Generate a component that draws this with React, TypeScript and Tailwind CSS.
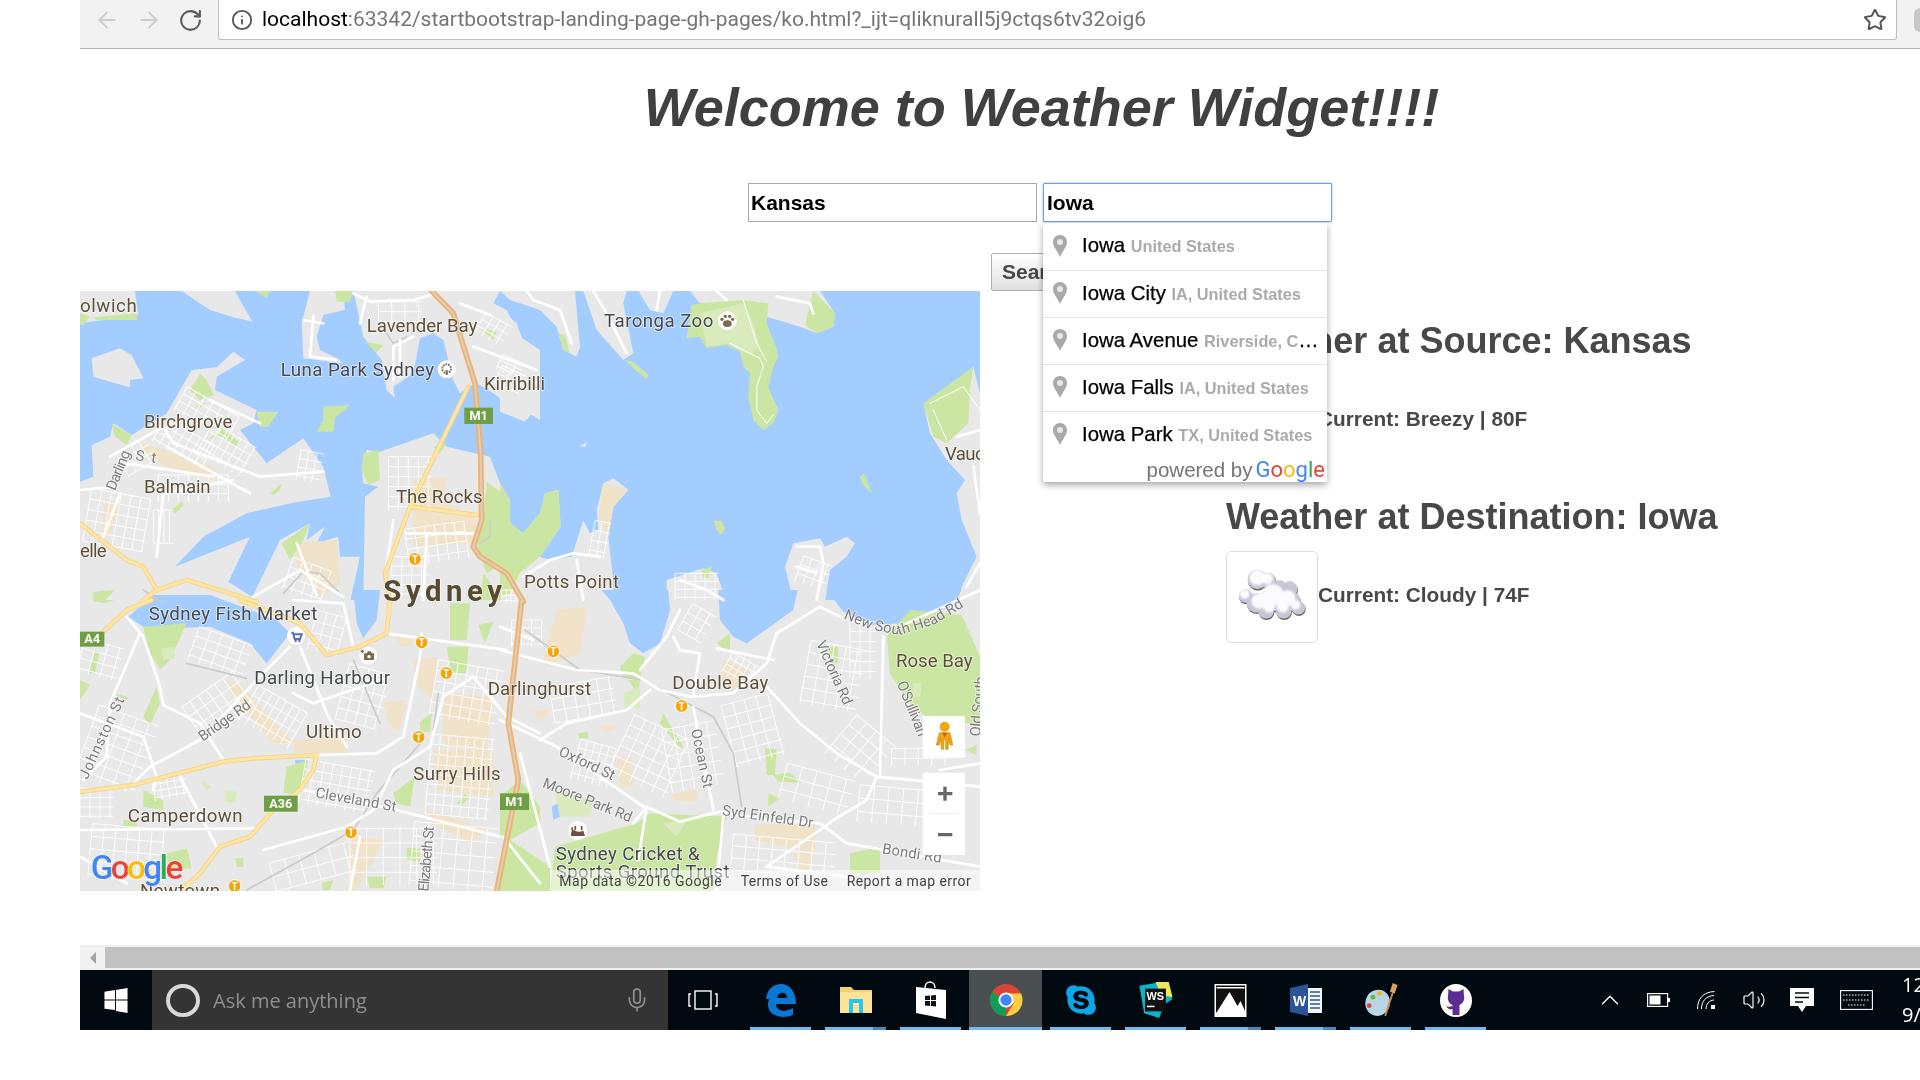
import { FaSkype } from "react-icons/fa";
import { ArrowLeft, ArrowRight, RotateCw, Info, Star, Mic, ChevronUp, Volume2 } from "lucide-react";

type Quad = "a" | "b" | "c" | "d";
type Item = [Quad, string];

const OFFSET: Record<Quad, [number, number]> = { a: [60, 280], b: [500, 280], c: [60, 590], d: [500, 590] };
const at = (q: Quad) => `translate(${OFFSET[q][0]} ${OFFSET[q][1]}) scale(0.33333)`;

// land, water, parks etc. are authored in 3x crop coordinates per quadrant of the map
const land: Item[] = [
  ["a", "M60 33H225L235 105L130 120L60 130Z"],
  ["a", "M365 33H525L545 70L578 125L520 112L450 90Z"],
  ["a", "M95 235L180 205L215 225L250 295L210 300L210 322L150 305L100 290Z"],
  ["a", "M750 33H850L855 90L790 105L770 170L780 210L830 235L850 250L730 235L725 130Z"],
  ["a", "M880 33H1320L1300 70L1340 90L1380 170L1440 210V420L1400 395L1340 370L1300 340L1250 310L1225 320L1200 340L1180 300L1150 180L1120 160L1080 175L1060 280L1000 320L1005 355L980 330L965 240L910 170Z"],
  ["a", "M60 605L100 590L95 495L150 470L160 430L215 465L320 400L395 270L470 262L520 215L555 240L470 290L465 330L590 390L580 430L540 450L620 550L730 475L790 560L812 650L700 668L560 700L430 770L345 860L570 770L505 905L600 965H60Z"],
  ["a", "M570 965L660 780L750 730L740 780L795 740L770 790L835 770L840 830L900 830L870 965Z"],
  ["a", "M910 965L915 650L955 620L910 610L905 560L920 510L960 515L1120 460L1160 500L1290 530L1320 610L1350 720L1360 780L1440 720V965Z"],
  ["b", "M0 33H225L240 200L230 230L190 210L170 140L120 90L30 60Z"],
  ["b", "M250 33H380L370 70L400 220L370 240L290 150Z"],
  ["b", "M415 33H520L490 100L450 90Z"],
  ["b", "M570 33H960L1005 100L1000 140L950 160L900 140L800 110L760 75L600 70Z"],
  ["b", "M0 210L100 270L105 390L75 425L0 395Z"],
  ["b", "M0 85L50 130L70 185L0 175Z"],
  ["b", "M240 497L262 485L255 502Z"],
  ["b", "M1440 340L1420 260L1360 320L1270 370L1290 460L1340 540L1395 600L1370 640L1385 720L1430 830L1390 910L1370 965H1440Z"],
  ["b", "M0 610L30 660L30 730L70 760L120 700L135 640L175 630L182 740L120 830L150 840L215 830L250 720L270 760L295 750L290 690L310 610L340 595L385 630L340 680L325 770L340 900V965H0Z"],
  ["b", "M500 900L610 865L650 880L680 965H500Z"],
  ["b", "M855 860L880 790L960 775L975 800L1040 770L1065 790L1040 830L990 870L975 965H880Z"],
  ["c", "M0 30H1440V903H0Z"],
  ["d", "M0 30H1440V903H0Z"],
];

const water: Item[] = [
  ["c", "M205 80L280 15L450 15L650 90L690 130L620 220L570 160L450 110L320 115L250 110Z"],
  ["c", "M880 0H960L950 90L910 145L890 100Z"],
  ["c", "M705 510L735 510L720 540L708 535Z"],
  ["d", "M305 0H505L510 60L480 160L430 190L390 160L370 100L330 30Z"],
  ["d", "M655 0H893L880 60L810 110L740 160L700 140L660 90Z"],
  ["d", "M980 0H1385L1350 50L1270 80L1210 100L1110 105L1030 65Z"],
  ["d", "M155 650L175 640L180 680L160 690Z"],
];

const parks: Item[] = [
  ["a", "M60 100L90 110L70 135L60 135Z"],
  ["a", "M100 112L230 100L232 120L110 120Z"],
  ["a", "M585 33H630L620 55Z"],
  ["a", "M825 33H880L870 65L830 65Z"],
  ["a", "M915 185L970 195L950 218Z"],
  ["a", "M1260 145L1310 155L1300 180Z"],
  ["a", "M390 330L420 282L440 300L462 345L420 360Z"],
  ["a", "M405 380L440 365L420 385Z"],
  ["a", "M155 432L215 465L200 495L165 470Z"],
  ["a", "M590 395L655 395L625 440L600 440Z"],
  ["a", "M445 478L490 445L540 490L530 498L480 468Z"],
  ["a", "M790 380L870 375L825 415L820 455L770 455L790 420Z"],
  ["a", "M910 520L955 510L960 600L925 615L905 570Z"],
  ["a", "M1120 500L1160 490L1140 520Z"],
  ["a", "M1280 605L1340 650L1350 730L1380 760L1440 730V790L1350 840L1280 880L1260 830L1250 780L1270 720Z"],
  ["a", "M632 640L665 610L660 630L640 645Z"],
  ["a", "M665 790L750 730L730 780L690 840Z"],
  ["a", "M335 690L365 665L372 675L345 700Z"],
  ["a", "M100 935L165 930L130 965L100 965Z"],
  ["a", "M1270 880L1330 960H1260Z"],
  ["b", "M600 70L730 60L805 70L800 130L830 205L835 230L820 260L805 320L835 390L820 430L790 450L760 420L745 350L750 280L730 260L720 215L680 195L620 205L600 170L560 175L575 75Z"],
  ["b", "M940 33L1005 100L1000 140L950 160L915 135Z"],
  ["b", "M175 160L195 165L210 220L190 210Z"],
  ["b", "M375 240L400 245L445 285L440 298L400 265Z"],
  ["b", "M1080 590L1092 580L1115 640L1090 615Z"],
  ["b", "M642 722L665 722L675 745L665 765L650 750Z"],
  ["b", "M1270 370L1420 260L1410 330L1405 430L1340 490L1300 470Z"],
  ["b", "M0 610L30 660L30 730L70 760L120 700L135 640L175 630L182 740L120 830L60 880L30 940L0 950Z"],
  ["b", "M605 870L635 860L625 895L610 895Z"],
  ["c", "M250 110L380 100L330 210L300 240L260 170Z"],
  ["c", "M290 290L250 380L270 405L300 340Z"],
  ["c", "M60 270L90 285L60 330Z"],
  ["c", "M85 250L105 180L118 190L105 250Z"],
  ["c", "M100 30L165 30L130 40Z"],
  ["c", "M680 530L745 510L720 610L670 610Z"],
  ["c", "M1170 40L1230 40L1220 150L1170 150Z"],
  ["c", "M1160 170L1225 170L1220 250L1175 250Z"],
  ["c", "M1255 105L1300 95L1275 160Z"],
  ["c", "M1080 395L1115 370L1110 425L1080 425Z"],
  ["c", "M1000 610L1065 560L1050 650L1010 640Z"],
  ["c", "M1190 640L1215 612L1228 625L1205 645Z"],
  ["c", "M250 600L310 630V660L250 650Z"],
  ["c", "M190 690L230 690V710L190 710Z"],
  ["c", "M320 790L380 775L395 835L330 840Z"],
  ["c", "M525 805L550 805L550 830L530 830Z"],
  ["c", "M785 880L820 870L810 900H790Z"],
  ["c", "M1040 775L1080 775L1080 815L1040 810Z"],
  ["c", "M920 860L980 860L970 895L930 895Z"],
  ["c", "M1380 570L1440 650V700L1350 750Z"],
  ["c", "M1330 750L1440 840V903H1310Z"],
  ["c", "M170 312L205 322L200 328L172 320Z"],
  ["d", "M0 620L60 570L115 700L30 745L0 740Z"],
  ["d", "M30 750L150 830V903H0Z"],
  ["d", "M450 670L680 680L650 800L640 903H150L165 770L410 700Z"],
  ["d", "M1050 790L1140 770V850L1050 850Z"],
  ["d", "M1160 140L1230 60L1385 75L1440 200V400L1300 400L1220 330L1170 250Z"],
  ["d", "M650 160L690 130L690 190Z"],
  ["d", "M360 230L400 190L435 200L420 270L370 265Z"],
  ["d", "M385 270L420 270L415 315Z"],
  ["d", "M490 370L550 470L545 480L480 400Z"],
  ["d", "M795 475L830 478L825 555L800 555Z"],
  ["d", "M820 555L870 548L905 578L835 575Z"],
  ["d", "M805 610L840 625L805 650Z"],
  ["d", "M235 430L262 425L265 445L238 445Z"],
  ["d", "M1395 480L1430 465L1430 495Z"],
  ["d", "M985 170L1015 170V220L990 220Z"],
];

const paleParks: Item[] = [
  ["b", "M600 100L730 70L760 130L780 200L750 225L680 190L620 200Z"],
  ["c", "M430 570L455 590L440 600L425 580Z"],
  ["c", "M495 600L530 605L525 640L495 635Z"],
  ["c", "M305 175L340 170L345 205L310 210Z"],
  ["d", "M165 605L280 630L270 680L180 680Z"],
  ["d", "M490 700L560 690L530 740Z"],
  ["d", "M370 310L420 290L420 355L375 350Z"],
  ["d", "M1240 280L1265 280L1260 320L1240 320Z"],
];

const beige: Item[] = [
  ["a", "M250 490L470 565L460 600L330 570L240 510Z"],
  ["a", "M140 660L180 670L150 770L120 760Z"],
  ["a", "M1060 600L1160 590L1150 660L1250 720L1240 790L1060 800Z"],
  ["a", "M700 790L830 780L840 910L780 950L710 860Z"],
  ["c", "M500 270L540 280L700 460L640 460L520 320Z"],
  ["c", "M700 450L860 445L860 490L700 490Z"],
  ["c", "M970 335L1040 330L1020 420L990 410Z"],
  ["c", "M1010 140L1060 135L1060 170L1020 170Z"],
  ["c", "M1060 210L1130 200L1120 330L1070 290Z"],
  ["c", "M1120 480L1300 480L1300 620L1130 600Z"],
  ["c", "M1150 310L1300 320L1280 480L1150 470Z"],
  ["c", "M870 740L980 750L960 770L890 900L865 900Z"],
  ["c", "M1100 660L1290 720L1230 760L1120 700Z"],
  ["d", "M170 60L260 50L240 190L140 230L130 200Z"],
  ["d", "M670 210L750 240L700 300L660 260Z"],
  ["d", "M765 705L950 700L945 790L765 750Z"],
  ["d", "M880 790L930 790L930 850L900 850Z"],
  ["d", "M350 510L395 500L400 590L360 590Z"],
  ["d", "M520 610L590 600L590 635L510 630Z"],
  ["d", "M305 405L355 410L330 425L310 425Z"],
  ["d", "M100 360L150 360L120 400Z"],
  ["b", "M1300 370L1370 345L1360 360L1300 375Z"],
  ["b", "M310 610L385 630L340 680L325 770L295 720Z"],
];

const streets: Item[] = [
  ["a", "M880 40L930 65L1060 60L1130 40M1200 70L1290 105M1240 200L1430 270M1060 170L1000 200L1000 300M150 530L310 440L340 490L600 590L790 575M310 640L290 830M60 630L170 620M180 640L130 770M310 640L520 600M200 550L460 590M450 360L600 430M320 500L570 640M1040 760L1240 760M1000 720L980 860M1100 760L1090 960M580 950L720 870L850 950M710 790L770 945M920 50L900 130M1020 180L1020 290M730 120L790 130M760 110L750 230L830 240"],
  ["b", "M80 33L100 60L180 90L215 190M280 33L320 100L380 220M480 33L470 90M650 33L680 60M830 50L930 70L940 100M1370 470L1440 450M1420 560L1440 700M230 840L250 960M70 890L150 840L220 820L300 830M540 900L620 930L670 960M890 800L960 800L970 850L950 960M890 860L950 880M1440 850L1400 920"],
  ["c", "M200 80L250 140L300 290L310 345L420 400L490 510M240 130L150 340L140 500L70 570M60 370L250 440L290 560L280 600M690 170L600 260L420 450L270 530L220 580M770 495L950 490L1030 440L1080 200L1085 130M730 600L1010 660L1320 740M610 780L860 710L940 660L1000 540L1110 470L1150 320L1240 260M980 130L1340 180M60 720L590 715M720 170L800 370L860 470M990 260L760 340L700 310M900 740L870 900M1330 740L1440 880M1240 260L1340 380L1440 430M360 560L470 770M700 30L850 40L880 170M60 800L200 880"],
  ["d", "M0 180L230 240L400 250L480 300L570 320L700 310L800 220L830 130L960 50L1030 85M1200 110L1440 0M650 175L820 210M520 140L540 180L600 190L580 310M540 60L500 140L420 240M800 290L900 400L1010 490L1130 560L1100 630L1000 690L960 720M1130 560L1440 590M440 650L540 695L660 665L800 690L960 700L1040 760L1440 830M580 350L640 660M0 390L170 470L430 650M60 490L150 830M120 450L200 400L380 360L450 300M1150 140L1140 560M1320 540L1440 520M670 680L650 900M0 110L100 150M400 700L440 650L415 810M960 720L800 830L1040 860"],
];

// thin footpaths through the parks
const paths: Item[] = [
  ["b", "M730 60L770 190L800 245M690 190L780 235L790 260L770 320L770 390L800 430L820 405M1290 370L1390 320M1300 390L1340 480M1390 320L1440 390"],
];

const grids: [Quad, number, number, number, number, number, number, number][] = [
  ["a", 440, 400, 180, 80, 30, 30, 24], ["a", 370, 490, 170, 80, 30, 24, 24], ["a", 500, 510, 150, 100, 30, 24, 28],
  ["a", 230, 530, 100, 80, -30, 26, 26], ["a", 400, 625, 210, 80, 0, 30, 28], ["a", 170, 720, 180, 160, 10, 30, 32],
  ["a", 310, 740, 60, 100, 0, 16, 100], ["a", 750, 560, 70, 90, 10, 24, 26], ["a", 1050, 610, 130, 160, 0, 30, 30],
  ["a", 1130, 790, 180, 110, -8, 30, 30], ["a", 1050, 890, 110, 120, 0, 30, 28], ["a", 1300, 150, 90, 70, 30, 24, 24],
  ["a", 1020, 100, 130, 70, 0, 40, 30], ["a", 1350, 300, 80, 60, 25, 30, 28], ["a", 740, 900, 120, 100, 20, 30, 30],
  ["b", 30, 260, 70, 50, 25, 24, 20], ["b", 300, 780, 50, 110, 10, 22, 30], ["b", 590, 920, 130, 80, 0, 30, 24],
  ["b", 940, 880, 90, 80, 20, 26, 28], ["b", 30, 950, 50, 40, 0, 14, 16],
  ["c", 170, 480, 190, 220, 20, 40, 34], ["c", 480, 350, 190, 130, -35, 30, 36], ["c", 640, 380, 170, 120, 30, 24, 34],
  ["c", 830, 590, 210, 130, 10, 28, 30], ["c", 200, 790, 220, 160, 5, 36, 38], ["c", 760, 830, 250, 90, -15, 46, 44],
  ["c", 1000, 800, 260, 170, 0, 50, 44], ["c", 1200, 560, 190, 240, 5, 26, 30], ["c", 1180, 800, 250, 190, 5, 44, 44],
  ["c", 1220, 310, 200, 170, 10, 30, 32], ["c", 910, 320, 130, 170, 15, 30, 34], ["c", 480, 190, 170, 110, 20, 36, 30],
  ["c", 120, 210, 120, 100, 15, 36, 30], ["c", 330, 590, 100, 70, -10, 22, 20], ["c", 110, 640, 100, 90, 0, 30, 28],
  ["c", 800, 130, 90, 120, 15, 30, 34],
  ["d", 580, 500, 160, 190, -10, 34, 40], ["d", 450, 500, 190, 190, 25, 36, 34], ["d", 760, 420, 150, 190, -15, 36, 36],
  ["d", 1000, 260, 170, 190, 10, 36, 36], ["d", 1080, 480, 150, 150, 40, 38, 38], ["d", 950, 600, 210, 110, 15, 46, 40],
  ["d", 850, 800, 310, 110, 5, 40, 36], ["d", 1200, 650, 250, 110, 5, 44, 40], ["d", 280, 520, 110, 120, 15, 22, 26],
  ["d", 250, 330, 190, 110, -10, 36, 36], ["d", 1260, 500, 170, 50, 0, 40, 30], ["d", 720, 240, 90, 70, 30, 20, 20],
  ["d", 590, 100, 80, 90, 30, 30, 30], ["d", 80, 130, 90, 80, 0, 30, 24], ["d", 1090, 180, 80, 170, 0, 30, 30],
];

const rails: Item[] = [
  ["a", "M670 940L730 875L780 880L850 950M960 130L1000 190L1040 170M1290 720L1290 770L1260 790"],
  ["c", "M560 900L760 790L880 720L950 610L1090 450M380 220L560 265M960 400L880 210M1135 310L1120 420M250 0L310 40"],
  ["d", "M75 120L240 240L430 270L640 380L700 490L725 650"],
];

const yellow: Item[] = [
  ["a", "M1225 320L1050 680L975 880L990 965M1050 680L1250 705M60 730L200 840L250 860L290 930L380 900L590 965M290 930L245 965"],
  ["c", "M990 30L980 130L900 170L800 195L720 100L540 30M275 30L200 60L130 125M60 605L220 585L490 515L580 505L770 495L760 540L720 600L640 660L570 740L480 770L420 850L370 895"],
];

const motorway: Item[] = [
  ["a", "M1115 33L1180 100L1245 310L1262 520L1265 720L1240 800L1260 830L1340 880L1390 965"],
  ["c", "M1385 30L1345 400L1375 570L1310 903"],
];

const signs: [Quad, number, number, number, number, string][] = [
  ["a", 1213, 383, 86, 49, "M1"], ["c", 60, 125, 73, 45, "A4"], ["c", 612, 617, 101, 48, "A36"], ["c", 1320, 610, 87, 50, "M1"],
];

const transit: [Quad, number, number][] = [
  ["a", 1065, 837], ["c", 1085, 157], ["c", 1159, 249], ["c", 1076, 441], ["c", 873, 727], ["c", 524, 888], ["d", 160, 184], ["d", 545, 348],
];

// x, y, width, text, colour, font size, rotation
const labels: [Quad, number, number, number, string, string, number, number][] = [
  ["a", 60, 97, 170, "olwich", "#5d4f37", 56, 0],
  ["a", 920, 157, 332, "Lavender Bay", "#5d4f37", 56, 0],
  ["a", 662, 288, 460, "Luna Park Sydney", "#44484f", 56, 0],
  ["a", 1272, 330, 183, "Kirribilli", "#5d4f37", 56, 0],
  ["a", 252, 445, 265, "Birchgrove", "#5d4f37", 56, 0],
  ["a", 252, 640, 200, "Balmain", "#5d4f37", 56, 0],
  ["a", 60, 830, 80, "elle", "#5d4f37", 56, 0],
  ["a", 1008, 670, 260, "The Rocks", "#5d4f37", 56, 0],
  ["b", 312, 140, 328, "Taronga Zoo", "#44484f", 56, 0],
  ["b", 1335, 540, 215, "Vaucluse", "#5d4f37", 56, 0],
  ["b", 72, 925, 285, "Potts Point", "#5d4f37", 56, 0],
  ["c", 266, 90, 506, "Sydney Fish Market", "#44484f", 56, 0],
  ["c", 583, 282, 407, "Darling Harbour", "#44484f", 56, 0],
  ["c", 738, 445, 167, "Ultimo", "#5d4f37", 56, 0],
  ["c", 1060, 570, 262, "Surry Hills", "#5d4f37", 56, 0],
  ["c", 203, 697, 345, "Camperdown", "#5d4f37", 56, 0],
  ["c", 240, 922, 240, "Newtown", "#5d4f37", 56, 0],
  ["d", -37, 315, 310, "Darlinghurst", "#5d4f37", 56, 0],
  ["d", 517, 298, 288, "Double Bay", "#5d4f37", 56, 0],
  ["d", 1188, 232, 230, "Rose Bay", "#5d4f37", 56, 0],
  ["d", 167, 810, 432, "Sydney Cricket &", "#44484f", 56, 0],
  ["d", 167, 865, 522, "Sports Ground Trust", "#44484f", 56, 0],
  ["a", 165, 634, 125, "Darling", "#7b7b7b", 44, -68],
  ["a", 225, 540, 62, "St", "#7b7b7b", 44, 8],
  ["c", 82, 570, 265, "Johnston St", "#7b7b7b", 44, -65],
  ["c", 428, 455, 180, "Bridge Rd", "#7b7b7b", 44, -35],
  ["c", 765, 622, 245, "Cleveland St", "#7b7b7b", 44, 10],
  ["c", 1105, 905, 195, "Elizabeth St", "#7b7b7b", 44, -85],
  ["d", 173, 495, 180, "Oxford St", "#7b7b7b", 44, 25],
  ["d", 125, 590, 285, "Moore Park Rd", "#7b7b7b", 44, 22],
  ["d", 573, 420, 180, "Ocean St", "#7b7b7b", 44, 78],
  ["d", 948, 160, 205, "Victoria Rd", "#7b7b7b", 44, 66],
  ["d", 1190, 280, 175, "O'Sullivan", "#7b7b7b", 44, 68],
  ["d", 1440, 440, 180, "Old South", "#7b7b7b", 44, -85],
  ["d", 665, 675, 275, "Syd Einfeld Dr", "#7b7b7b", 44, 8],
  ["d", 1145, 790, 180, "Bondi Rd", "#7b7b7b", 44, 9],
];

function MapLayer({ items, fill = "none", stroke, width }: { items: Item[]; fill?: string; stroke?: string; width?: number }) {
  return (
    <>
      {items.map(([q, d], i) => (
        <path key={i} transform={at(q)} d={d} fill={fill} stroke={stroke} strokeWidth={width} strokeLinejoin="round" strokeLinecap="round" />
      ))}
    </>
  );
}

function gridPath(w: number, h: number, sx: number, sy: number) {
  let d = "";
  for (let x = -w / 2; x <= w / 2; x += sx) d += `M${x} ${-h / 2}V${h / 2}`;
  for (let y = -h / 2; y <= h / 2; y += sy) d += `M${-w / 2} ${y}H${w / 2}`;
  return d;
}

function SydneyMap() {
  return (
    <svg viewBox="80 291 900 600" className="h-[600px] w-[900px] shrink-0 bg-[#a3ccff]">
      <MapLayer items={land} fill="#e8e8e8" />
      <MapLayer items={water} fill="#a3ccff" />
      <MapLayer items={beige} fill="#f1e2ca" />
      <MapLayer items={parks} fill="#cbe6a3" />
      <MapLayer items={paleParks} fill="#d9ebbd" />
      {grids.map(([q, cx, cy, w, h, deg, sx, sy], i) => (
        <g key={i} transform={at(q)}>
          <path transform={`translate(${cx} ${cy}) rotate(${deg})`} d={gridPath(w, h, sx, sy)} stroke="#ffffff" strokeOpacity={0.85} strokeWidth={3} fill="none" />
        </g>
      ))}
      <MapLayer items={rails} stroke="#cbcbcb" width={5} />
      <MapLayer items={paths} stroke="#ffffff" width={3} />
      <MapLayer items={streets} stroke="#ffffff" width={8} />
      <MapLayer items={yellow} stroke="#f5d287" width={14} />
      <MapLayer items={yellow} stroke="#fde5a4" width={9} />
      <MapLayer items={motorway} stroke="#f4b169" width={17} />
      <MapLayer items={motorway} stroke="#d6d0c4" width={6} />

      {signs.map(([q, x, y, w, h, t]) => (
        <g key={t + x} transform={at(q)}>
          <rect x={x} y={y} width={w} height={h} fill="#6f9f45" />
          <text x={x + w / 2} y={y + h - 12} textAnchor="middle" fontFamily="Roboto, sans-serif" fontWeight={700} fontSize={38} fill="#fff">{t}</text>
        </g>
      ))}
      {transit.map(([q, x, y]) => (
        <g key={q + x} transform={at(q)}>
          <circle cx={x} cy={y} r={19} fill="#f2a60c" stroke="#fff" strokeWidth={3} />
          <text x={x} y={y + 11} textAnchor="middle" fontFamily="Roboto, sans-serif" fontWeight={700} fontSize={30} fill="#fff">T</text>
        </g>
      ))}

      <g fontFamily="Roboto, sans-serif" stroke="#ffffff" strokeOpacity={0.65} strokeWidth={5} paintOrder="stroke">
        {labels.map(([q, x, y, w, t, c, fs, r]) => (
          <g key={t} transform={at(q)}>
            <text x={x} y={y} textLength={w} fontSize={fs} fill={c} transform={r ? `rotate(${r} ${x} ${y})` : undefined}>{t}</text>
          </g>
        ))}
        <g transform={at("a")}>
          <text x={970} y={963} textLength={356} fontSize={88} fontWeight={700} fill="#584a30">Sydney</text>
        </g>
        <g transform={at("d")}>
          <path id="nsh" d="M1030 85L1110 118L1200 135L1300 105L1400 45" fill="none" stroke="none" />
          <text fontSize={44} fill="#7b7b7b"><textPath href="#nsh">New South Head Rd</textPath></text>
        </g>
      </g>

      {/* poi badges */}
      <g transform={at("a")}>
        <circle cx={1160} cy={268} r={27} fill="#fff" />
        <circle cx={1160} cy={266} r={13} fill="none" stroke="#7c6f5c" strokeWidth={6} strokeDasharray="5 3" />
        <path d="M1160 270V285" stroke="#7c6f5c" strokeWidth={6} />
      </g>
      <g transform={at("b")}>
        <circle cx={682} cy={122} r={28} fill="#fff" />
        <ellipse cx={682} cy={131} rx={13} ry={10} fill="#7c6a4f" />
        <circle cx={666} cy={118} r={5} fill="#7c6a4f" />
        <circle cx={676} cy={109} r={5} fill="#7c6a4f" />
        <circle cx={689} cy={109} r={5} fill="#7c6a4f" />
        <circle cx={698} cy={118} r={5} fill="#7c6a4f" />
      </g>
      <g transform={at("c")}>
        <circle cx={708} cy={138} r={27} fill="#fff" />
        <path d="M694 128H699L704 147H720L725 133H701" fill="none" stroke="#5a6bc4" strokeWidth={6} />
        <circle cx={707} cy={153} r={3.5} fill="#5a6bc4" />
        <circle cx={718} cy={153} r={3.5} fill="#5a6bc4" />
        <circle cx={925} cy={197} r={27} fill="#fff" fillOpacity={0.9} />
        <path d="M912 190H920L924 184H932L936 190H942V210H912Z" fill="#7c6a4f" />
        <circle cx={927} cy={200} r={5} fill="#fff" />
        <path d="M902 184H912M907 179V189" stroke="#7c6a4f" strokeWidth={4} />
      </g>
      <g transform={at("d")}>
        <circle cx={233} cy={722} r={28} fill="#fff" />
        <path d="M213 732Q215 715 226 722Q236 728 250 722L255 738H213Z" fill="#6e4f42" />
        <path d="M217 712V722M226 708V720M245 708V720" stroke="#6e4f42" strokeWidth={5} />
        <rect x={150} y={840} width={1290} height={63} fill="#ffffff" fillOpacity={0.5} />
        <g fontFamily="Roboto, sans-serif" fontSize={42} fill="#444">
          <text x={178} y={887} textLength={487}>Map data ©2016 Google</text>
          <text x={722} y={887} textLength={262}>Terms of Use</text>
          <text x={1040} y={887} textLength={372}>Report a map error</text>
        </g>
        {/* pegman */}
        <rect x={1268} y={378} width={127} height={125} rx={5} fill="#fff" />
        <circle cx={1334} cy={410} r={15} fill="#f2a60c" />
        <path d="M1318 428H1350L1358 465H1350L1346 445L1344 478H1337V450H1331V478H1324L1322 445L1318 465H1309Z" fill="#f2a60c" stroke="#c68a12" strokeWidth={2} />
        <path d="M1326 428L1334 442L1342 428Z" fill="#d05a2a" />
        {/* zoom control */}
        <rect x={1268} y={548} width={127} height={247} rx={5} fill="#fff" />
        <rect x={1290} y={670} width={84} height={2} fill="#e6e6e6" />
        <path d="M1335 590V632M1314 611H1357M1314 734H1357" stroke="#666" strokeWidth={10} fill="none" />
      </g>
      <g transform={at("c")} fontFamily="Roboto, sans-serif" fontSize={100} fontWeight={500} stroke="#fff" strokeOpacity={0.7} strokeWidth={4} paintOrder="stroke">
        <text x={92} y={867} textLength={278}>
          <tspan fill="#4285f4">G</tspan>
          <tspan fill="#ea4335">o</tspan>
          <tspan fill="#fbbc05">o</tspan>
          <tspan fill="#4285f4">g</tspan>
          <tspan fill="#34a853">l</tspan>
          <tspan fill="#ea4335">e</tspan>
        </text>
      </g>
    </svg>
  );
}

function CloudThumb() {
  const body: [number, number, number][] = [
    [31, 28, 10], [42, 29, 8], [54, 36, 7], [64, 38, 8], [19, 45, 7], [30, 52, 10], [48, 47, 13], [65, 50, 10], [73, 57, 7], [40, 60, 8], [58, 60, 8],
  ];
  const highlights: [number, number, number][] = [
    [31, 26, 8], [41, 27, 6], [18, 43, 5], [33, 50, 8], [47, 44, 11], [62, 47, 8], [43, 56, 6], [57, 56, 6], [70, 54, 5],
  ];
  return (
    <div className="h-[92px] w-[92px] shrink-0 rounded-[5px] border border-[#ddd] bg-white">
      <svg viewBox="0 0 92 92" className="h-full w-full">
        <g fill="#6a6a66" transform="translate(0.5 1.5)">
          {body.map(([x, y, r]) => (<circle key={`${x}${y}`} cx={x} cy={y} r={r} />))}
        </g>
        <g fill="#c6c6d6">
          {body.map(([x, y, r]) => (<circle key={`${x}${y}`} cx={x} cy={y} r={r} />))}
        </g>
        <g fill="#fbfbfd" className="blur-[1px]">
          {highlights.map(([x, y, r]) => (<circle key={`${x}${y}`} cx={x} cy={y} r={r} />))}
        </g>
      </svg>
    </div>
  );
}

function PinIcon() {
  return (
    <svg viewBox="0 0 14 22" className="h-[22px] w-[14px] shrink-0">
      <path d="M7 0C3 0 0 3 0 7c0 5 4 8 7 15 3-7 7-10 7-15 0-4-3-7-7-7z" fill="#a9a9a9" />
      <circle cx="7" cy="7" r="3" fill="#e8e8e8" />
    </svg>
  );
}

const suggestions = [
  { main: "Iowa", sub: "United States" },
  { main: "Iowa City", sub: "IA, United States" },
  { main: "Iowa Avenue", sub: "Riverside, CA, United States" },
  { main: "Iowa Falls", sub: "IA, United States" },
  { main: "Iowa Park", sub: "TX, United States" },
];

function Autocomplete() {
  return (
    <div className="absolute left-0 top-[40px] z-10 h-[259px] w-[284px] rounded-b-[2px] bg-white shadow-[0_3px_7px_rgba(0,0,0,0.35)]">
      {suggestions.map((s, i) => (
        <div key={s.main} className={`flex h-[47px] items-center gap-[15px] pb-[2px] pl-[10px] pr-[7px] ${i > 0 ? "border-t border-[#e6e6e6]" : ""}`}>
          <PinIcon />
          <div className="truncate text-[20.4px] text-black [-webkit-text-stroke:0.25px_black]">
            {s.main}{" "}
            <span className="text-[16.3px] font-bold text-[#aaaaaa] [-webkit-text-stroke:0]">{s.sub}</span>
          </div>
        </div>
      ))}
      <div className="flex items-baseline justify-end gap-[3px] pr-[2px] text-[20.5px] leading-[24px] text-[#757575]">
        <span>powered by</span>
        <span className="text-[22px] font-['Roboto',sans-serif]">
          <span className="text-[#4285f4]">G</span>
          <span className="text-[#ea4335]">o</span>
          <span className="text-[#fbbc05]">o</span>
          <span className="text-[#4285f4]">g</span>
          <span className="text-[#34a853]">l</span>
          <span className="text-[#ea4335]">e</span>
        </span>
      </div>
    </div>
  );
}

function WeatherBlock({ heading, current }: { heading: string; current: string }) {
  return (
    <div className="mt-[29px]">
      <h2 className="h-[40px] whitespace-nowrap pt-[1px] text-[36px] font-bold leading-[40px] text-[#484848]">{heading}</h2>
      <div className="mt-[15px] flex items-center">
        <CloudThumb />
        <span className="whitespace-nowrap pb-[5px] text-[20.8px] font-bold text-[#484848]">{current}</span>
      </div>
    </div>
  );
}

function BrowserBar() {
  return (
    <div className="flex h-[49px] shrink-0 items-start border-b border-[#b4b4b4] bg-[#f2f2f2]">
      <div className="flex h-[40px] w-[138px] shrink-0 items-center pl-[14px] text-[#cdcdcd]">
        <ArrowLeft size={26} strokeWidth={1.8} />
        <ArrowRight size={26} strokeWidth={1.8} className="ml-[16px]" />
        <RotateCw size={25} strokeWidth={2} className="ml-[16px] text-[#5a5a5a]" />
      </div>
      <div className="flex h-[40px] w-[1679px] shrink-0 items-center rounded-b-[3px] border-x border-b border-[#bdbdbd] bg-white pl-[12px]">
        <Info size={22} strokeWidth={2} className="shrink-0 text-[#555]" />
        <span className="ml-[9px] whitespace-nowrap pt-[1px] font-['Roboto',sans-serif] text-[21px] text-[#757575]">
          <span className="text-black">localhost</span>:63342/startbootstrap-landing-page-gh-pages/ko.html?_ijt=qliknurall5j9ctqs6tv32oig6
        </span>
        <Star size={24} strokeWidth={2} className="ml-auto mr-[9px] text-[#555]" />
      </div>
      <div className="ml-[17px] mt-[8px] h-[24px] w-[12px] shrink-0 rounded-full bg-[#c8c8c8]" />
    </div>
  );
}

function Task({ w = 61, active, gap = 14, split, children }: { w?: number; active?: boolean; gap?: number; split?: boolean; children: React.ReactNode }) {
  return (
    <div className={`relative flex h-[60px] shrink-0 items-center justify-center ${active ? "bg-[#4a5052]" : ""}`} style={{ width: w, marginRight: gap }}>
      {children}
      <div className="absolute bottom-0 left-0 h-[3px] w-full bg-[#76b9ed]" />
      {split && <div className="absolute bottom-0 right-0 h-[3px] w-[13px] bg-[#4f86b3]" />}
    </div>
  );
}

function Taskbar() {
  return (
    <div className="flex h-[60px] shrink-0 overflow-hidden bg-[#010a10]">
      <div className="flex w-[72px] shrink-0 items-center justify-center">
        <svg viewBox="0 0 24 26" className="h-[25px] w-[24px]" fill="#fff">
          <path d="M0 4L11 2.2V12H0zM12 2L24 0V12H12zM0 13H11V23L0 21.5zM12 13H24V26L12 24z" />
        </svg>
      </div>
      <div className="flex w-[516px] shrink-0 items-center bg-[#343434]">
        <div className="ml-[14px] h-[33px] w-[34px] rounded-full border-[4px] border-[#d8d8d8]" />
        <span className="ml-[13px] pt-[1px] font-['Open_Sans',sans-serif] text-[20px] text-[#8f8f8f]">Ask me anything</span>
        <Mic size={26} strokeWidth={1.6} className="ml-auto mr-[18px] text-[#8f8f8f]" />
      </div>
      <div className="flex w-[82px] shrink-0 items-center justify-center pr-[12px]">
        <svg viewBox="0 0 30 20" className="h-[20px] w-[30px]" fill="none" stroke="#fff" strokeWidth="1.4">
          <rect x="7" y="1" width="16" height="18" />
          <path d="M3 4H1V16H3M27 4H29V16H27" />
        </svg>
      </div>
      <Task>
        <svg viewBox="0 0 30 33" className="h-[33px] w-[30px]">
          <path fillRule="evenodd" d="M0 15C1 5 8 0 15 0C24 0 30 8 30 20H10C10 27 19 29 27 24V31C15 36 2 31 2 21C2 16 4 12 9 9C6 11 4 13 3 15ZM11 14H21C21 7 12 7 11 14Z" fill="#0a78d7" />
        </svg>
      </Task>
      <Task split>
        <svg viewBox="0 0 32 26" className="h-[26px] w-[32px]">
          <path d="M0 0H11L14 3H32V26H0Z" fill="#f6d26a" />
          <path d="M0 5H32V26H0Z" fill="#fbe39a" />
          <path d="M9 26V12H23V26H19V16H13V26Z" fill="#29c4f0" />
        </svg>
      </Task>
      <Task gap={8}>
        <svg viewBox="0 0 34 38" className="h-[38px] w-[34px]">
          <path d="M11 7C11 -1 21 -1 21 7" fill="none" stroke="#fff" strokeWidth="1.5" />
          <path d="M2 6L32 9V38L2 32Z" fill="#fff" />
          <path d="M11 15L16 14.5V19H11ZM17 14.5L22 14V19H17ZM11 20H16V25L11 24.5ZM17 20H22V25.5L17 25Z" fill="#111" />
        </svg>
      </Task>
      <Task w={73} active gap={8}>
        <svg viewBox="0 0 36 36" className="h-[34px] w-[34px]">
          <circle cx="18" cy="18" r="17" fill="#db4437" />
          <path d="M18 18L3.3 26.5A17 17 0 0 1 3.3 9.5Z" fill="#0f9d58" />
          <path d="M18 18L18 35A17 17 0 0 1 3.3 26.5L10 14Z" fill="#0f9d58" />
          <path d="M18 11H34A17 17 0 0 1 18 35L26 22Z" fill="#ffcd40" />
          <circle cx="18" cy="18" r="8" fill="#fff" />
          <circle cx="18" cy="18" r="6" fill="#4285f4" />
        </svg>
      </Task>
      <Task><FaSkype size={34} color="#0ea5e6" /></Task>
      <Task>
        <svg viewBox="0 0 36 38" className="h-[36px] w-[35px]">
          <path d="M1 4L24 0L36 18L27 24L22 38L6 33Z" fill="#0ab5c9" />
          <path d="M18 0H32L36 16L24 14Z" fill="#f0e65a" />
          <rect x="7" y="7" width="22" height="24" fill="#111" />
          <text x="8.5" y="19" fill="#fff" fontSize="11.5" fontWeight="700" fontFamily="Liberation Sans, sans-serif">WS</text>
          <rect x="9" y="25" width="8" height="1.6" fill="#fff" />
        </svg>
      </Task>
      <Task split>
        <svg viewBox="0 0 32 33" className="h-[33px] w-[33px]">
          <rect width="32" height="33" fill="#fff" />
          <path d="M1.5 1.5H30.5V27L26 17L23 22L15 8L3 27L1.5 29Z" fill="#111" />
          <rect x="2" y="3" width="28" height="1.5" fill="#fff" />
        </svg>
      </Task>
      <Task split>
        <svg viewBox="0 0 32 32" className="h-[32px] w-[32px]">
          <path d="M0 4L18 0V32L0 28Z" fill="#2a5699" />
          <rect x="18" y="4" width="14" height="25" fill="#f3f6fb" />
          <path d="M20 8H30M20 12H30M20 16H30M20 20H30M20 24H30" stroke="#2a5699" strokeWidth="1.6" />
          <text x="3" y="22" fill="#fff" fontSize="14" fontWeight="700" fontFamily="Liberation Sans, sans-serif">W</text>
        </svg>
      </Task>
      <Task>
        <svg viewBox="0 0 36 36" className="h-[34px] w-[35px]">
          <ellipse cx="15" cy="21" rx="13" ry="14" fill="#b8d6e6" transform="rotate(15 15 21)" />
          <circle cx="6" cy="24" r="2.6" fill="#e0483c" />
          <circle cx="10" cy="15" r="2.6" fill="#6cb33f" />
          <circle cx="17" cy="11" r="2.6" fill="#f2b632" />
          <path d="M33 4L23 35" stroke="#c98a3a" strokeWidth="2" />
          <path d="M31 0L36 2L33 11L28 9Z" fill="#d6a467" />
        </svg>
      </Task>
      <Task gap={100}>
        <svg viewBox="0 0 32 33" className="h-[33px] w-[32px]">
          <ellipse cx="16" cy="16.5" rx="16" ry="16.5" fill="#fff" />
          <path d="M8 12L8.5 5L13 7.5H19L23.5 5L24 12C25 17 22 20 19.5 21V31H12.5V25C10 26 8 25 6 22C8 23 10 23 12.5 22V21C10 20 7 17 8 12Z" fill="#5c2d91" />
        </svg>
      </Task>
      <div className="flex w-[48px] shrink-0 items-center justify-center text-white"><ChevronUp size={30} strokeWidth={1.1} /></div>
      <div className="flex w-[48px] shrink-0 items-center justify-center">
        <svg viewBox="0 0 23 14" className="h-[14px] w-[23px]" fill="none" stroke="#fff" strokeWidth="1.2">
          <rect x="0.6" y="0.6" width="20" height="12.8" />
          <rect x="2.5" y="2.5" width="11" height="9" fill="#fff" stroke="none" />
          <rect x="21" y="5" width="2" height="4" fill="#fff" stroke="none" />
        </svg>
      </div>
      <div className="flex w-[48px] shrink-0 items-center justify-center">
        <svg viewBox="0 0 18 18" className="h-[18px] w-[18px]" fill="none" stroke="#fff" strokeWidth="1">
          <path d="M0.5 18C0.5 8 6 1 17.5 0.5M4.5 18C4.5 10 9 5 17 4.5M9 18C9 13 12 9.5 17 9" />
          <rect x="14" y="14" width="4" height="4" fill="#fff" stroke="none" />
        </svg>
      </div>
      <div className="flex w-[48px] shrink-0 items-center justify-center text-white"><Volume2 size={24} strokeWidth={1.2} /></div>
      <div className="flex w-[48px] shrink-0 items-center justify-center">
        <svg viewBox="0 0 24 24" className="h-[24px] w-[24px]">
          <path d="M0 0H24V18H16L12 24L8 18H0Z" fill="#fff" />
          <path d="M5 5H19M5 9.5H19M5 14H13" stroke="#010a10" strokeWidth="1.4" />
        </svg>
      </div>
      <div className="flex w-[60px] shrink-0 items-center justify-center">
        <svg viewBox="0 0 33 20" className="h-[20px] w-[33px]" fill="none" stroke="#fff" strokeWidth="1.1">
          <rect x="0.6" y="0.6" width="31.8" height="18.8" />
          <path d="M3 5H30M3 10H30M8 15H25" strokeDasharray="1.5 1.5" />
        </svg>
      </div>
      <div className="flex w-[100px] shrink-0 flex-col justify-center pl-[16px] font-['Open_Sans',sans-serif] text-[20px] leading-[30px] text-white">
        <span className="whitespace-nowrap">12:31 PM</span>
        <span className="whitespace-nowrap">9/27/2016</span>
      </div>
    </div>
  );
}

export default function App() {
  return (
    <div className="flex h-[1080px] w-[1920px] overflow-hidden bg-white pb-[50px] pl-[80px] font-['Liberation_Sans',Arial,sans-serif] blur-[0.4px]">
      <div className="flex w-[1840px] flex-col">
        <BrowserBar />
        <div className="h-[896px] w-[1920px] shrink-0 overflow-hidden">
          <h1 className="mt-[27px] h-[62px] pl-[3px] text-center text-[54px] font-bold italic leading-[62px] text-[#404040]">
            Welcome to Weather Widget!!!!
          </h1>
          <div className="mt-[45px] flex justify-center gap-[6px]">
            <input readOnly value="Kansas" className="h-[39px] w-[289px] border border-[#a9a9a9] pl-[2px] pt-[1px] text-[21px] font-bold text-black outline-none" />
            <div className="relative">
              <input readOnly value="Iowa" className="h-[39px] w-[289px] rounded-[1px] border border-[#6f9fe6] pl-[3px] pt-[1px] text-[21px] font-bold text-black shadow-[0_0_2px_#6f9fe6] outline-none" />
              <Autocomplete />
            </div>
          </div>
          <div className="mt-[31px] flex justify-center">
            <button className="h-[38px] w-[98px] rounded-[2px] border border-[#adadad] bg-gradient-to-b from-white to-[#e0e0e0] pl-[10px] text-left text-[21px] font-bold text-[#484848]">
              Search
            </button>
          </div>
          <div className="flex">
            <SydneyMap />
            <div className="ml-[246px]">
              <WeatherBlock heading="Weather at Source: Kansas" current="Current: Breezy | 80F" />
              <WeatherBlock heading="Weather at Destination: Iowa" current="Current: Cloudy | 74F" />
            </div>
          </div>
        </div>
        <div className="flex h-[23px] shrink-0 items-stretch border-t-2 border-[#f0f0f0] bg-[#f1f1f1]">
          <div className="flex w-[25px] shrink-0 items-center justify-center">
            <div className="h-0 w-0 border-y-[6px] border-r-[6px] border-y-transparent border-r-[#a3a3a3]" />
          </div>
          <div className="flex-1 bg-[#c1c1c1]" />
        </div>
        <div className="h-[2px] shrink-0 bg-[#f0f0f0]" />
        <Taskbar />
      </div>
    </div>
  );
}
